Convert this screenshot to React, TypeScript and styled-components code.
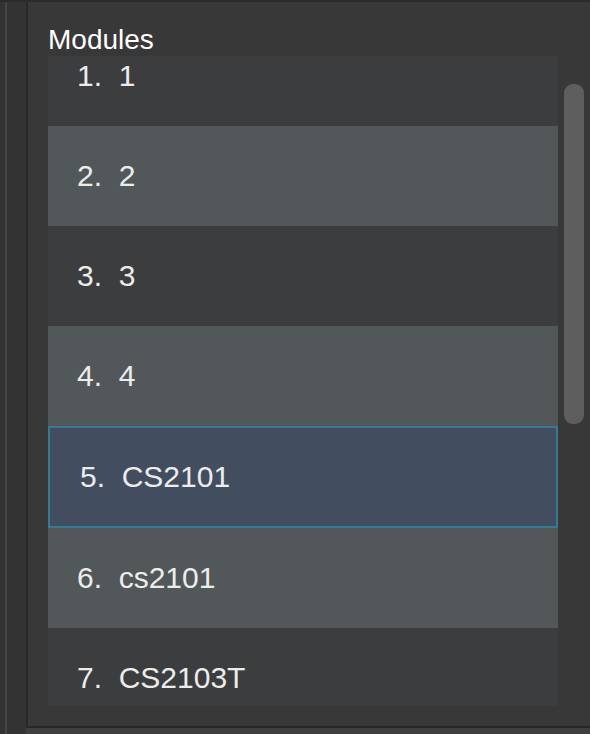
import React from "react";
import styled, { createGlobalStyle } from "styled-components";

const Global = createGlobalStyle`
  html, body { margin: 0; padding: 0; background: #333333; }
  body { font-family: "Liberation Sans", Arial, sans-serif; }
  * { box-sizing: border-box; }
`;

const Screen = styled.div`
  width: 590px;
  height: 734px;
  display: flex;
  flex-direction: column;
  background: #333333;
  overflow: hidden;
`;

const TopStrip = styled.div`
  height: 2px;
  flex: none;
  background: #2b2b2b;
`;

const Body = styled.div`
  flex: 1;
  display: flex;
  min-height: 0;
`;

const Gutter = styled.div`
  width: 26px;
  flex: none;
  padding-left: 5px;
  background: #333333;
  display: flex;
`;

const GutterLine = styled.div`
  width: 2px;
  background: #454545;
`;

const Column = styled.div`
  flex: 1;
  display: flex;
  flex-direction: column;
  min-width: 0;
`;

const Panel = styled.div`
  flex: 1;
  display: flex;
  flex-direction: column;
  background: #383838;
  border-left: 2px solid #282828;
  border-bottom: 2px solid #282828;
  padding: 22px 0 20px 20px;
  min-height: 0;
`;

const BottomStrip = styled.div`
  height: 6px;
  flex: none;
  background: #3f3f3f;
`;

const Title = styled.div`
  font-size: 28px;
  line-height: 32px;
  height: 32px;
  color: #ffffff;
  padding-left: 0;
`;

const ListArea = styled.div`
  flex: 1;
  display: flex;
  min-height: 0;
`;

const List = styled.div`
  width: 510px;
  flex: none;
  overflow: hidden;
  background: #3c3d3f;
`;

const ListInner = styled.div`
  margin-top: -30px;
  display: flex;
  flex-direction: column;
`;

const Row = styled.div<{ $shade: "dark" | "light"; $selected?: boolean }>`
  height: ${(p) => (p.$selected ? 102 : 100)}px;
  flex: none;
  display: flex;
  align-items: center;
  padding-left: ${(p) => (p.$selected ? 30 : 29)}px;
  font-size: 30px;
  color: #ececec;
  white-space: pre;
  background: ${(p) =>
    p.$selected ? "#424e60" : p.$shade === "light" ? "#525859" : "#3c3d3f"};
  border: ${(p) => (p.$selected ? "2px solid #387a94" : "none")};
`;

const ScrollTrack = styled.div`
  width: 32px;
  flex: none;
  padding: 28px 6px 0 6px;
`;

const Thumb = styled.div`
  width: 20px;
  height: 340px;
  border-radius: 9px;
  background: #5e5e5e;
`;

const modules = ["1", "2", "3", "4", "CS2101", "cs2101", "CS2103T"];

export default function App() {
  return (
    <>
      <Global />
      <Screen>
        <TopStrip />
        <Body>
          <Gutter>
            <GutterLine />
          </Gutter>
          <Column>
            <Panel>
              <Title>Modules</Title>
              <ListArea>
                <List>
                  <ListInner>
                    {modules.map((m, i) => (
                      <Row
                        key={i}
                        $shade={i % 2 === 0 ? "dark" : "light"}
                        $selected={i === 4}
                      >
                        {`${i + 1}.  ${m}`}
                      </Row>
                    ))}
                  </ListInner>
                </List>
                <ScrollTrack>
                  <Thumb />
                </ScrollTrack>
              </ListArea>
            </Panel>
            <BottomStrip />
          </Column>
        </Body>
      </Screen>
    </>
  );
}
